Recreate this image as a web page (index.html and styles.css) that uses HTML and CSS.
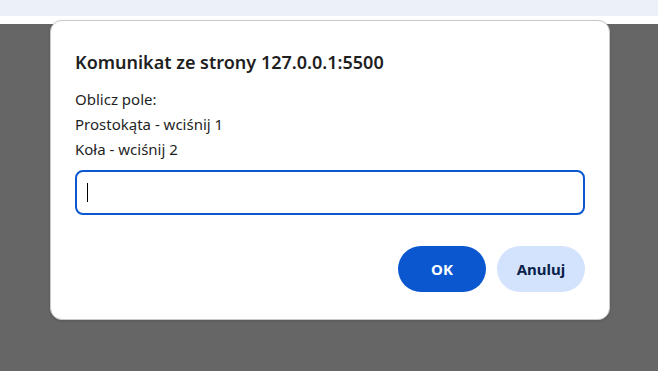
FILE: index.html
```html
<html>
  <head>
    <link rel="stylesheet" href="styles.css">
  </head>
  <body>
    <div class="tabbar"></div>
    <div class="strip"></div>
    <main class="page"></main>

    <div class="dialog">
      <h3 class="dialog-title">Komunikat ze strony 127.0.0.1:5500</h3>
      <div class="dialog-message">
        <p>Oblicz pole:</p>
        <p>Prostokąta - wciśnij 1</p>
        <p>Koła - wciśnij 2</p>
      </div>
      <div class="dialog-input"><span class="caret"></span></div>
      <div class="dialog-buttons">
        <button class="btn btn-ok">OK</button>
        <button class="btn btn-cancel">Anuluj</button>
      </div>
    </div>
  </body>
</html>
```

FILE: styles.css
```css
html,
body {
  margin: 0;
  padding: 0;
  height: 100%;
}
body {
  font-family: "Noto Sans", "Open Sans", sans-serif;
  background: #666;
  display: flex;
  flex-direction: column;
  overflow: hidden;
}
.tabbar {
  height: 16px;
  background: #ecf1f9;
}
.strip {
  height: 8px;
  background: #fff;
}
.page {
  flex: 1;
  background: #666;
}
.dialog {
  position: absolute;
  top: 20px;
  left: 50px;
  width: 560px;
  height: 300px;
  box-sizing: border-box;
  padding: 28px 24px 0 24px;
  background: #fff;
  border: 1px solid #c9c9c9;
  border-radius: 12px;
  box-shadow: 0 1px 3px rgba(0, 0, 0, 0.15);
  color: #1f1f1f;
}
.dialog-title {
  margin: 0;
  font-size: 18px;
  font-weight: 600;
  line-height: 26px;
}
.dialog-message {
  margin-top: 12px;
  font-size: 15px;
  line-height: 25px;
}
.dialog-message p {
  margin: 0;
}
.dialog-input {
  margin-top: 8px;
  height: 45px;
  box-sizing: border-box;
  border: 2px solid #0b57d0;
  border-radius: 8px;
  display: flex;
  align-items: center;
  padding-left: 10px;
}
.caret {
  width: 1px;
  height: 19px;
  background: #000;
}
.dialog-buttons {
  display: flex;
  justify-content: flex-end;
  gap: 11px;
  margin-top: 31px;
}
.btn {
  width: 88px;
  height: 46px;
  border: none;
  border-radius: 23px;
  font-family: inherit;
  font-size: 15px;
  font-weight: 700;
}
.btn-ok {
  background: #0b57d0;
  color: #fff;
}
.btn-cancel {
  background: #d3e3fd;
  color: #0a1f4a;
}
```
